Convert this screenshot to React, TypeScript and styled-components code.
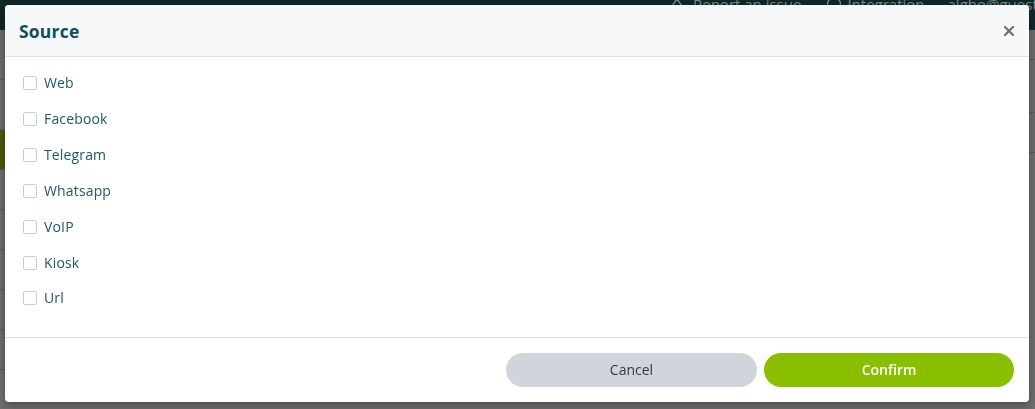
import React from "react";
import styled, { createGlobalStyle } from "styled-components";

const Global = createGlobalStyle`
  html, body { margin: 0; padding: 0; }
  body {
    width: 1035px;
    height: 409px;
    overflow: hidden;
    font-family: "Open Sans", "Noto Sans", sans-serif;
    background: #6e6e6e;
  }
`;

const Page = styled.div`
  width: 1035px;
  height: 409px;
  display: flex;
  flex-direction: column;
  background: #6f6f6f;
  overflow: hidden;
`;

const TopBar = styled.div`
  height: 30px;
  background: #0e292b;
  display: flex;
  align-items: flex-start;
  padding-left: 668px;
  color: #7d8d8e;
  font-size: 15px;
  line-height: 16px;
  overflow: hidden;
  flex-shrink: 0;
`;

const TopItem = styled.span<{ $gap: number; $ml: number }>`
  display: flex;
  align-items: center;
  gap: ${(p) => p.$gap}px;
  margin-left: ${(p) => p.$ml}px;
  margin-top: -4px;
  white-space: nowrap;
  flex-shrink: 0;
`;

const Content = styled.div`
  flex: 1;
  display: flex;
`;

const Side = styled.div<{ $w: number }>`
  width: ${(p) => p.$w}px;
  display: flex;
  flex-direction: column;
  flex-shrink: 0;
`;

const Spacer = styled.div`
  flex: 1;
`;

const BgRow = styled.div<{ $h: number; $bg?: string }>`
  height: ${(p) => p.$h}px;
  background: ${(p) => p.$bg || "#6d6d6d"};
  border-bottom: 1px solid #5c5c5c;
  flex-shrink: 0;
`;

const Dialog = styled.div`
  position: fixed;
  left: 5px;
  top: 5px;
  width: 1024px;
  height: 397px;
  background: #ffffff;
  border-radius: 4px;
  box-shadow: 0 3px 10px rgba(0, 0, 0, 0.35);
  display: flex;
  flex-direction: column;
  overflow: hidden;
`;

const Header = styled.div`
  height: 51px;
  background: #f7f8fa;
  border-bottom: 1px solid #dcdfe3;
  display: flex;
  align-items: center;
  justify-content: space-between;
  padding: 0 14px;
  flex-shrink: 0;
`;

const Title = styled.h2`
  margin: 0;
  margin-top: 1px;
  font-size: 17.5px;
  font-weight: 700;
  color: #0d4f5b;
  letter-spacing: 0.2px;
`;

const Close = styled.button`
  border: 0;
  background: transparent;
  padding: 0;
  width: 12px;
  height: 12px;
  display: flex;
  align-items: center;
  justify-content: center;
  margin-top: 1px;
  cursor: pointer;
`;

const Body = styled.div`
  flex: 1;
  padding: 8px 18px 0;
  display: flex;
  flex-direction: column;
`;

const Row = styled.label`
  height: 35.85px;
  display: flex;
  align-items: center;
  gap: 7px;
  cursor: pointer;
  padding-top: 1px;
  box-sizing: border-box;
`;

const Box = styled.span`
  width: 12px;
  height: 12px;
  border: 1px solid #c9cdd2;
  border-radius: 2px;
  background: #fff;
  flex-shrink: 0;
`;

const Label = styled.span`
  font-size: 14px;
  color: #205a66;
  line-height: 20px;
  letter-spacing: 0.15px;
`;

const Footer = styled.div`
  height: 63px;
  border-top: 1px solid #dcdfe3;
  display: flex;
  justify-content: flex-end;
  align-items: center;
  gap: 7px;
  padding: 0 15px 1px;
  flex-shrink: 0;
`;

const Btn = styled.button<{ $primary?: boolean }>`
  width: ${(p) => (p.$primary ? 250 : 251)}px;
  height: 34px;
  border: 0;
  border-radius: 17px;
  font-family: "Open Sans", "Noto Sans", sans-serif;
  font-size: 14px;
  font-weight: ${(p) => (p.$primary ? 600 : 400)};
  background: ${(p) => (p.$primary ? "#8abf00" : "#d0d5dc")};
  color: ${(p) => (p.$primary ? "#ffffff" : "#3a3a3a")};
  cursor: pointer;
`;

const items = ["Web", "Facebook", "Telegram", "Whatsapp", "VoIP", "Kiosk", "Url"];

export default function App() {
  return (
    <>
      <Global />
      <Page>
        <TopBar>
          <TopItem $gap={7} $ml={0}>
            <svg width="18" height="14" viewBox="0 0 18 14" fill="none" stroke="#7d8d8e" strokeWidth="1.4">
              <path d="M2 12 L9 2 L16 12 Z" />
            </svg>
            Report an issue
          </TopItem>
          <TopItem $gap={5} $ml={25}>
            <svg width="16" height="16" viewBox="0 0 16 16" fill="none" stroke="#7d8d8e" strokeWidth="1.4">
              <circle cx="8" cy="8" r="6.5" />
            </svg>
            Integration
          </TopItem>
          <TopItem $gap={0} $ml={23}>algho@guest.com</TopItem>
        </TopBar>
        <Content>
          <Side $w={60}>
            <BgRow $h={49} />
            <BgRow $h={49} />
            <BgRow $h={39} $bg="#4b5a06" />
            <BgRow $h={39} />
            <BgRow $h={39} />
            <BgRow $h={39} />
            <BgRow $h={39} />
            <BgRow $h={39} />
          </Side>
          <Spacer />
          <Side $w={60}>
            <BgRow $h={29} />
            <BgRow $h={52} />
            <BgRow $h={39} />
          </Side>
        </Content>
      </Page>
      <Dialog role="dialog">
        <Header>
          <Title>Source</Title>
          <Close aria-label="Close">
            <svg width="10" height="10" viewBox="0 0 10 10">
              <path d="M1 1 L9 9 M9 1 L1 9" stroke="#6f6f6f" strokeWidth="2.2" strokeLinecap="square" />
            </svg>
          </Close>
        </Header>
        <Body>
          {items.map((it) => (
            <Row key={it}>
              <Box />
              <Label>{it}</Label>
            </Row>
          ))}
        </Body>
        <Footer>
          <Btn>Cancel</Btn>
          <Btn $primary>Confirm</Btn>
        </Footer>
      </Dialog>
    </>
  );
}
